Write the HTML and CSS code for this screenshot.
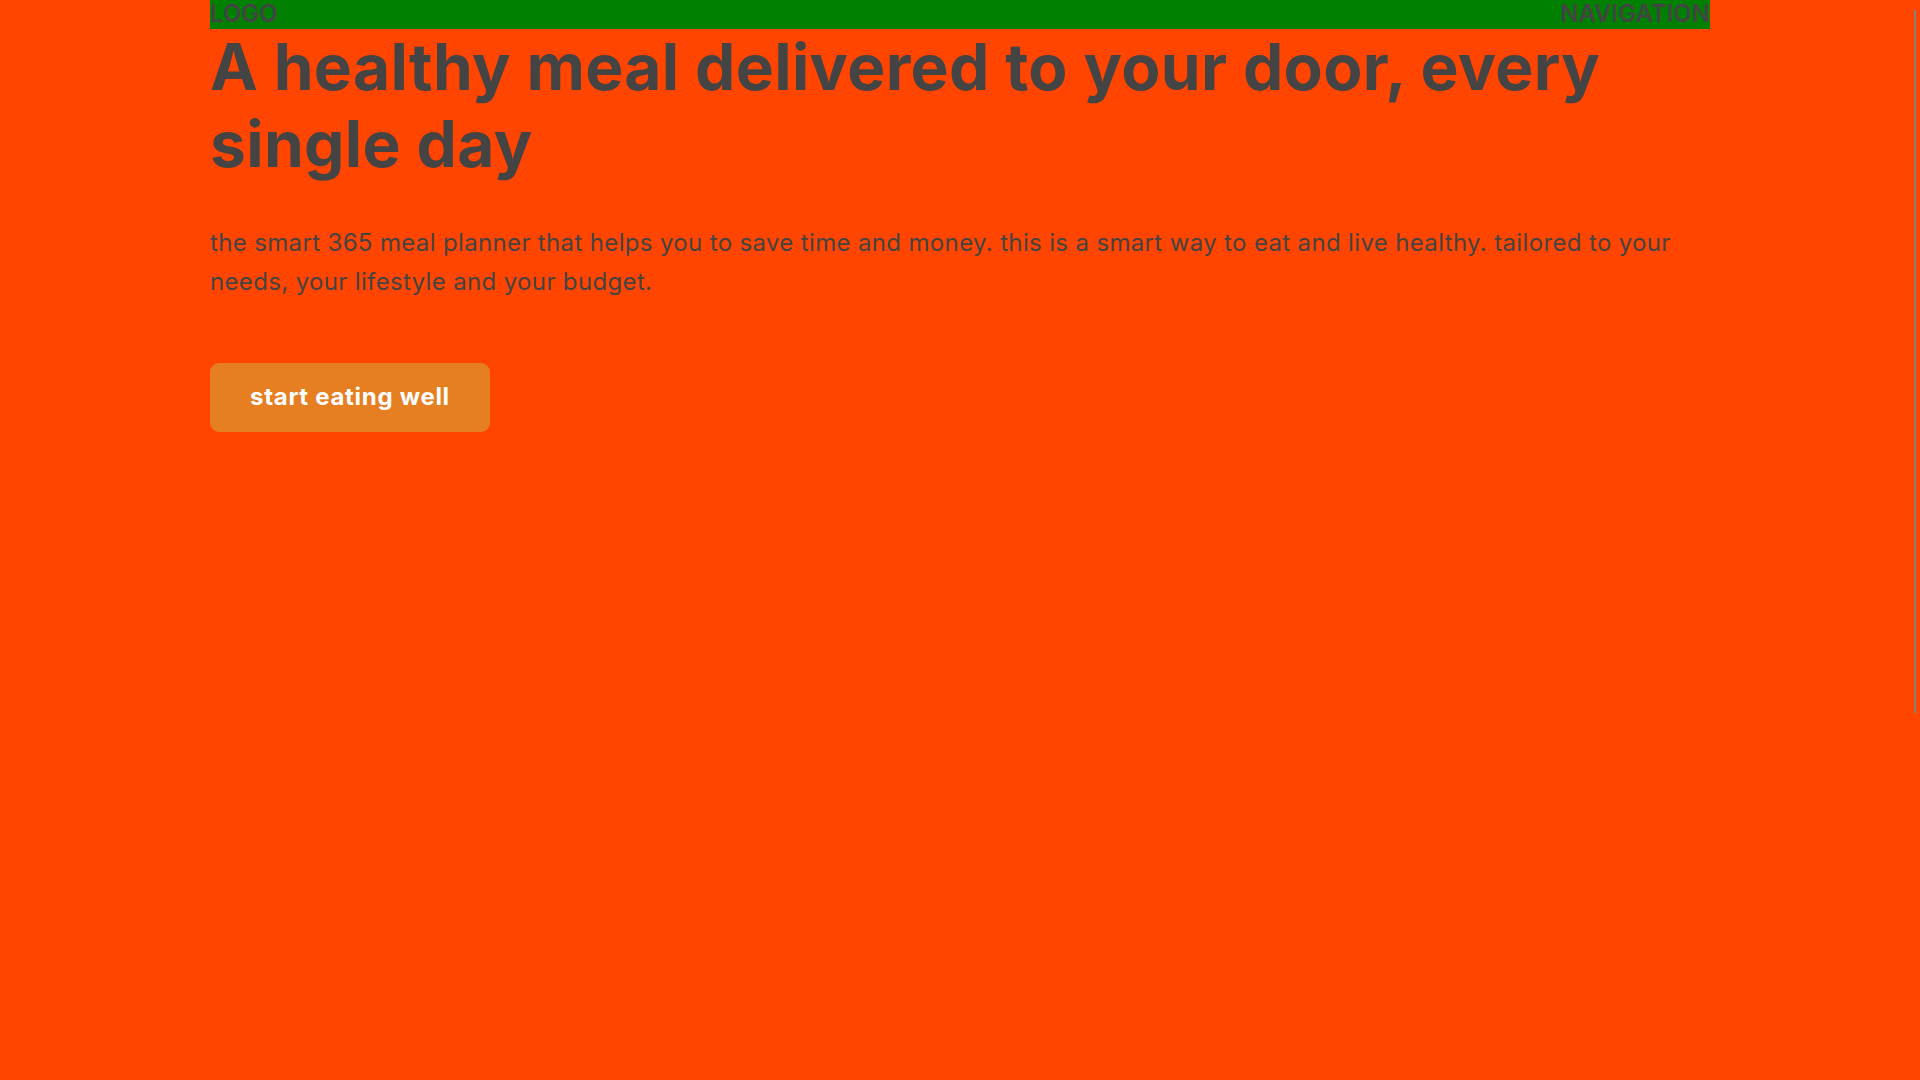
FILE: index.html
```
<!DOCTYPE html>
<html lang="en">
<head>
<meta charset="utf-8">
<title>Healthy meals</title>
<link rel="stylesheet" href="styles.css">
</head>
<body>
<div class="container">
  <header class="header">
    <div class="logo">LOGO</div>
    <nav class="nav">NAVIGATION</nav>
  </header>
  <section class="hero">
    <h1 class="hero-title">A healthy meal delivered to your door, every single day</h1>
    <p class="hero-text">the smart 365 meal planner that helps you to save time and money. this is a smart way to eat and live healthy. tailored to your needs, your lifestyle and your budget.</p>
    <a class="btn" href="#">start eating well</a>
  </section>
</div>
<div class="scroll-thumb"></div>
</body>
</html>
```
FILE: styles.css
```
* { box-sizing: border-box; }
html, body { margin: 0; padding: 0; }
body {
  background: #ff4500;
  color: #444;
  font-family: "Inter", "Roboto", sans-serif;
  height: 1080px;
  overflow: hidden;
}
.container {
  width: 1500px;
  margin: 0 auto;
}
.header {
  display: flex;
  justify-content: space-between;
  background: #008000;
  font-size: 24px;
  line-height: 1.2;
  font-weight: 600;
}
.hero-title {
  margin: 0;
  font-size: 64px;
  line-height: 1.2;
  font-weight: 700;
  letter-spacing: 0.35px;
}
.hero-text {
  margin: 42px 0 62px;
  font-size: 24px;
  line-height: 1.6;
  letter-spacing: 0.35px;
}
.btn {
  display: inline-block;
  background: #e67e22;
  color: #fff;
  text-decoration: none;
  font-size: 24px;
  line-height: 1.2;
  font-weight: 700;
  padding: 20px 40px;
  border-radius: 9px;
  letter-spacing: 0.7px;
}
.scroll-thumb {
  position: fixed;
  top: 10px;
  right: 4px;
  width: 2px;
  height: 703px;
  background: #8a7f7a;
}
```
